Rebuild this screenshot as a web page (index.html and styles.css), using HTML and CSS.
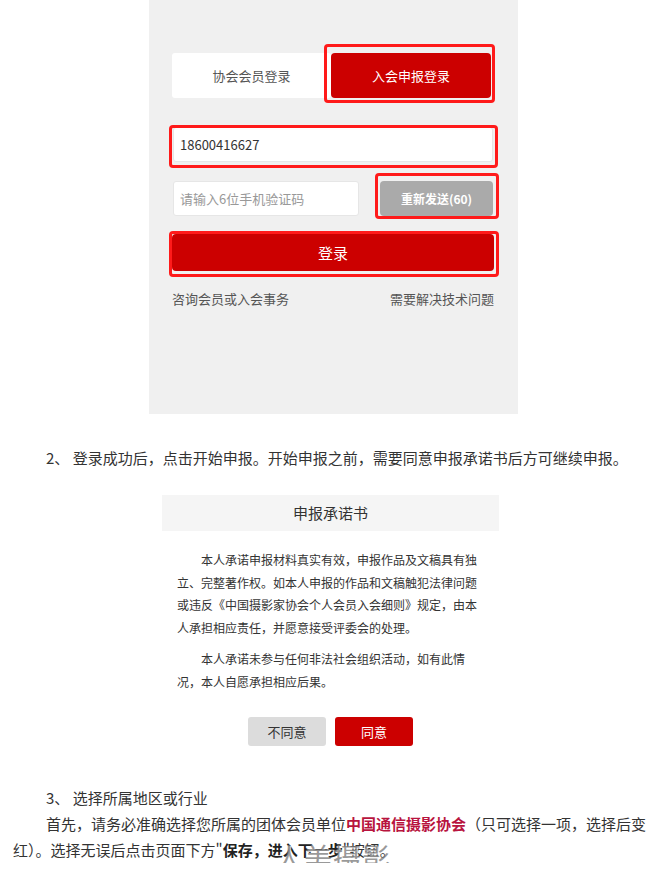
FILE: index.html
```html
<!DOCTYPE html>
<html lang="zh-CN">
<head>
  <meta charset="UTF-8">
  <title>入会申报登录说明</title>
  <link rel="stylesheet" href="styles.css">
</head>
<body>
  <div class="article">

    <div class="login-shot">
      <div class="tabs">
        <div class="tab">协会会员登录</div>
        <div class="tab tab-active">入会申报登录<span class="mark mark-tab"></span></div>
      </div>

      <div class="field field-phone">18600416627<span class="mark mark-phone"></span></div>

      <div class="code-row">
        <div class="field field-code">请输入6位手机验证码</div>
        <div class="resend">重新发送(60)<span class="mark mark-resend"></span></div>
      </div>

      <div class="login-btn">登录<span class="mark mark-login"></span></div>

      <div class="login-links">
        <span>咨询会员或入会事务</span>
        <span>需要解决技术问题</span>
      </div>
    </div>

    <p class="step">2、 登录成功后，点击开始申报。开始申报之前，需要同意申报承诺书后方可继续申报。</p>

    <div class="pledge">
      <div class="pledge-title">申报承诺书</div>
      <div class="pledge-body">
        <p>本人承诺申报材料真实有效，申报作品及文稿具有独立、完整著作权。如本人申报的作品和文稿触犯法律问题或违反《中国摄影家协会个人会员入会细则》规定，由本人承担相应责任，并愿意接受评委会的处理。</p>
        <p>本人承诺未参与任何非法社会组织活动，如有此情况，本人自愿承担相应后果。</p>
      </div>
      <div class="pledge-buttons">
        <div class="btn-disagree">不同意</div>
        <div class="btn-agree">同意</div>
      </div>
    </div>

    <div class="section">
      <p class="step">3、 选择所属地区或行业</p>
      <p class="step">首先，请务必准确选择您所属的团体会员单位<b class="red">中国通信摄影协会</b>（只可选择一项，选择后变红）。选择无误后点击页面下方"<b>保存，进入下一步</b>"按钮。</p>
      <div class="watermark">人美摄影</div>
    </div>

  </div>
</body>
</html>
```

FILE: styles.css
```css
body {
  margin: 0;
  padding: 0;
  font-family: "Noto Sans CJK SC", "Liberation Sans", sans-serif;
  color: #333;
  background: #fff;
}

.article {
  width: 640px;
  padding-left: 13px;
}

/* login screenshot */
.login-shot {
  width: 369px;
  height: 414px;
  box-sizing: border-box;
  margin-left: 136px;
  padding: 53px 24px 0 23px;
  background: #f0f0f0;
  font-size: 13px;
  color: #555;
}

.tabs {
  display: flex;
  height: 45px;
}
.tab {
  position: relative;
  width: 159px;
  display: flex;
  align-items: center;
  justify-content: center;
  background: #fff;
  border-radius: 3px;
}
.tab-active {
  width: 160px;
  background: #cc0000;
  color: #fff;
  border-radius: 4px;
}

.field {
  position: relative;
  height: 35px;
  box-sizing: border-box;
  padding-left: 6px;
  display: flex;
  align-items: center;
  background: #fff;
  border-radius: 3px;
  border: 1px solid #e6e6e6;
}
.field-phone {
  margin: 29px 1px 0 1px;
  color: #333;
}
.code-row {
  display: flex;
  justify-content: space-between;
  margin: 19px 1px 0 1px;
}
.field-code {
  width: 186px;
  color: #999;
}
.resend {
  position: relative;
  width: 113px;
  height: 35px;
  display: flex;
  align-items: center;
  justify-content: center;
  background: #aaaaaa;
  border-radius: 4px;
  color: #fff;
  font-size: 12px;
  font-weight: bold;
}

.login-btn {
  position: relative;
  height: 37px;
  margin-top: 18px;
  display: flex;
  align-items: center;
  justify-content: center;
  background: #cc0000;
  border-radius: 4px;
  color: #fff;
  font-size: 15px;
}

.login-links {
  display: flex;
  justify-content: space-between;
  margin-top: 18px;
}

/* red annotation frames */
.mark {
  position: absolute;
  border: 3px solid #ff1a1a;
  border-radius: 4px;
  pointer-events: none;
}
.mark-tab { left: -7px; right: -4px; top: -9px; bottom: -5px; }
.mark-phone { left: -5px; right: -6px; top: -3px; bottom: -7px; }
.mark-resend { left: -5px; right: -6px; top: -8px; bottom: -3px; }
.mark-login { left: -3px; right: -5px; top: -3px; bottom: -6px; }

/* text */
.step {
  margin: 0;
  font-size: 15px;
  line-height: 26px;
  text-indent: 33px;
}
.article > .step {
  margin-top: 31px;
}
.red {
  color: #b8143e;
}
b {
  color: #222;
}

/* pledge dialog */
.pledge {
  width: 337px;
  margin: 24px 0 0 149px;
  background: #fff;
  padding-bottom: 11px;
}
.pledge-title {
  height: 36px;
  line-height: 36px;
  background: #f5f5f5;
  text-align: center;
  font-size: 15px;
  color: #333;
}
.pledge-body {
  padding: 18px 0 0 15px;
  width: 301px;
}
.pledge-body p {
  margin: 0 0 9px;
  font-size: 12px;
  line-height: 22.5px;
  text-indent: 2em;
  color: #333;
}
.pledge-buttons {
  display: flex;
  justify-content: center;
  gap: 9px;
  margin-top: 24px;
}
.btn-disagree, .btn-agree {
  width: 78px;
  height: 29px;
  display: flex;
  align-items: center;
  justify-content: center;
  border-radius: 3px;
  font-size: 13px;
}
.btn-disagree {
  background: #dcdcdc;
  color: #333;
}
.btn-agree {
  background: #cc0000;
  color: #fff;
}

.section {
  position: relative;
  margin-top: 28px;
}

.watermark {
  position: absolute;
  left: 262px;
  top: 58px;
  font-size: 28px;
  line-height: 1;
  letter-spacing: 1px;
  color: rgba(120, 120, 120, 0.75);
  text-shadow: 1px 1px 0 rgba(255, 255, 255, 0.8);
  pointer-events: none;
}
```
